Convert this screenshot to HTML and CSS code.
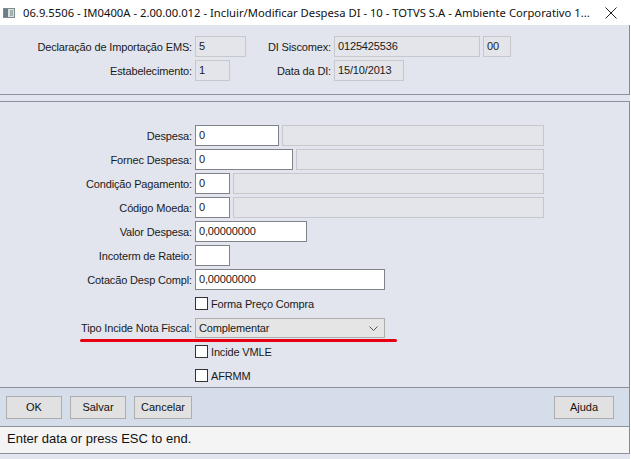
FILE: index.html
```html
<!DOCTYPE html>
<html lang="pt">
<head>
    <meta charset="UTF-8">
    <title>Incluir/Modificar Despesa DI</title>
    <link rel="stylesheet" href="styles.css">
</head>
<body>
<div id="window">
    <div id="titlebar">
        <svg class="appicon" width="12" height="10" viewBox="0 0 12 10">
            <rect x="0.5" y="0.5" width="11" height="9" fill="#d9dfe0" stroke="#7d8a90"/>
            <rect x="1" y="1" width="4" height="8" fill="#6b7f88"/>
            <rect x="7" y="2" width="3" height="6" fill="#9fb4a8"/>
        </svg>
        <span class="title">06.9.5506 - IM0400A - 2.00.00.012 - Incluir/Modificar Despesa DI - 10 - TOTVS S.A - Ambiente Corporativo 1...</span>
        <svg class="close" width="12" height="12" viewBox="0 0 12 12">
            <path d="M0.5 0.5 L11.5 11.5 M11.5 0.5 L0.5 11.5" stroke="#222" stroke-width="1" fill="none"/>
        </svg>
    </div>

    <div id="head">
        <div class="hgrid">
            <span class="hlbl">Declaração de Importação EMS:</span>
            <span class="c1"><span class="fld ro" style="width:51px">5</span></span>
            <span class="hlbl">DI Siscomex:</span>
            <span class="c4"><span class="fld ro" style="width:146px">0125425536</span><span class="fld ro" style="width:28px">00</span></span>

            <span class="hlbl">Estabelecimento:</span>
            <span class="c1"><span class="fld ro" style="width:35px">1</span></span>
            <span class="hlbl">Data da DI:</span>
            <span class="c4"><span class="fld ro" style="width:70px">15/10/2013</span></span>
        </div>
    </div>

    <div id="main">
        <div class="row">
            <span class="lbl">Despesa:</span>
            <span class="fld ed" style="width:84px">0</span>
            <span class="fld ro grow"></span>
        </div>
        <div class="row">
            <span class="lbl">Fornec Despesa:</span>
            <span class="fld ed" style="width:98px">0</span>
            <span class="fld ro grow"></span>
        </div>
        <div class="row">
            <span class="lbl">Condição Pagamento:</span>
            <span class="fld ed" style="width:35px">0</span>
            <span class="fld ro grow"></span>
        </div>
        <div class="row">
            <span class="lbl">Código Moeda:</span>
            <span class="fld ed" style="width:35px">0</span>
            <span class="fld ro grow"></span>
        </div>
        <div class="row">
            <span class="lbl">Valor Despesa:</span>
            <span class="fld ed" style="width:112px">0,00000000</span>
        </div>
        <div class="row">
            <span class="lbl">Incoterm de Rateio:</span>
            <span class="fld ed" style="width:35px"></span>
        </div>
        <div class="row">
            <span class="lbl">Cotacão Desp Compl:</span>
            <span class="fld ed" style="width:190px">0,00000000</span>
        </div>
        <div class="row">
            <span class="lbl"></span>
            <span class="chk"></span><span class="chktxt">Forma Preço Compra</span>
        </div>
        <div class="row">
            <span class="lbl">Tipo Incide Nota Fiscal:</span>
            <span class="combo">Complementar
                <svg class="chev" width="9" height="5" viewBox="0 0 9 5"><path d="M0.5 0.5 L4.5 4.5 L8.5 0.5" stroke="#555" fill="none"/></svg>
            </span>
        </div>
        <div class="row">
            <span class="lbl"></span>
            <span class="chk"></span><span class="chktxt">Incide VMLE</span>
        </div>
        <div class="row">
            <span class="lbl"></span>
            <span class="chk"></span><span class="chktxt">AFRMM</span>
        </div>
        <div class="mark"></div>
    </div>

    <div id="buttons">
        <button class="btn">OK</button>
        <button class="btn">Salvar</button>
        <button class="btn wide">Cancelar</button>
        <span class="spacer"></span>
        <button class="btn help">Ajuda</button>
    </div>

    <div id="status">Enter data or press ESC to end.</div>
</div>
</body>
</html>
```

FILE: styles.css
```css
body{
    margin: 0px;
    background-color: #ffffff;
}
#window{
    width: 630px;
    height: 459px;
    display: flex;
    flex-direction: column;
    font-family: "Liberation Sans", Arial, sans-serif;
    font-size: 11px;
    letter-spacing: -0.15px;
    color: #1a1a1a;
    background-color: #e2e5ed;
}
#titlebar{
    height: 25px;
    flex: none;
    display: flex;
    align-items: center;
    background-color: #ffffff;
    padding-left: 3px;
    letter-spacing: 0px;
}
.appicon{
    flex: none;
    margin-right: 8px;
}
.title{
    font-family: "Noto Sans", sans-serif;
    font-size: 11.25px;
    color: #111;
    white-space: nowrap;
    overflow: hidden;
    flex: 1;
}
.close{
    flex: none;
    margin-left: 8px;
    margin-right: 13px;
}
#head{
    height: 70px;
    flex: none;
    border-right: 1px solid #868a94;
    border-bottom: 1px solid #8d919b;
    box-sizing: border-box;
    padding-top: 11px;
}
.hgrid{
    display: grid;
    grid-template-columns: 192px 68px 71px auto;
    grid-auto-rows: 21px;
    row-gap: 3px;
    align-items: center;
}
.hlbl{
    text-align: right;
    white-space: nowrap;
}
.c1{
    margin-left: 3px;
    display: flex;
}
.c4{
    margin-left: 3px;
    display: flex;
    gap: 3px;
}
.fld{
    display: inline-block;
    height: 21px;
    line-height: 19px;
    box-sizing: border-box;
    padding-left: 3px;
    white-space: nowrap;
}
.ro{
    background-color: #e4e5ea;
    border: 1px solid #c6c8cc;
}
.ed{
    background-color: #ffffff;
    border: 1px solid #7f838a;
}
#main{
    position: relative;
    flex: none;
    margin-top: 6px;
    border-top: 1px solid #8d919b;
    border-right: 1px solid #868a94;
    border-bottom: 1px solid #8d919b;
    height: 287px;
    box-sizing: border-box;
    padding-top: 23px;
}
.row{
    display: flex;
    align-items: center;
    height: 21px;
    margin-bottom: 3px;
}
.lbl{
    width: 192px;
    flex: none;
    margin-right: 3px;
    text-align: right;
    white-space: nowrap;
}
.row .grow{
    width: 0;
    flex: 1;
    margin-left: 3px;
    margin-right: 85px;
}
.chk{
    width: 13px;
    height: 13px;
    box-sizing: border-box;
    background-color: #ffffff;
    border: 1px solid #333333;
}
.chktxt{
    margin-left: 3px;
}
.combo{
    position: relative;
    width: 190px;
    height: 20px;
    line-height: 18px;
    box-sizing: border-box;
    padding-left: 3px;
    background-color: #e5e5e5;
    border: 1px solid #adadad;
}
.chev{
    position: absolute;
    right: 6px;
    top: 7px;
}
.mark{
    position: absolute;
    left: 80px;
    top: 237px;
    width: 317px;
    height: 3px;
    border-radius: 2px;
    background-color: #e60012;
}
#buttons{
    height: 39px;
    flex: none;
    display: flex;
    align-items: center;
    gap: 8px;
    padding-left: 6px;
    background-color: #d5dcea;
    border-right: 1px solid #868a94;
    border-bottom: 1px solid #8d919b;
    box-sizing: border-box;
}
.btn{
    width: 56px;
    height: 23px;
    font-family: "Liberation Sans", Arial, sans-serif;
    font-size: 11px;
    color: #111;
    background-color: #e1e1e1;
    border: 1px solid #adadad;
    padding: 0px;
}
.wide{
    width: 58px;
}
.spacer{
    flex: 1;
}
.help{
    width: 60px;
    margin-right: 15px;
}
#status{
    height: 27px;
    flex: none;
    line-height: 24px;
    padding-left: 7px;
    background-color: #f4f4f4;
    border-right: 1px solid #868a94;
    border-bottom: 1px solid #8d919b;
    box-sizing: border-box;
    font-size: 13px;
    letter-spacing: 0px;
    color: #111;
}
```
